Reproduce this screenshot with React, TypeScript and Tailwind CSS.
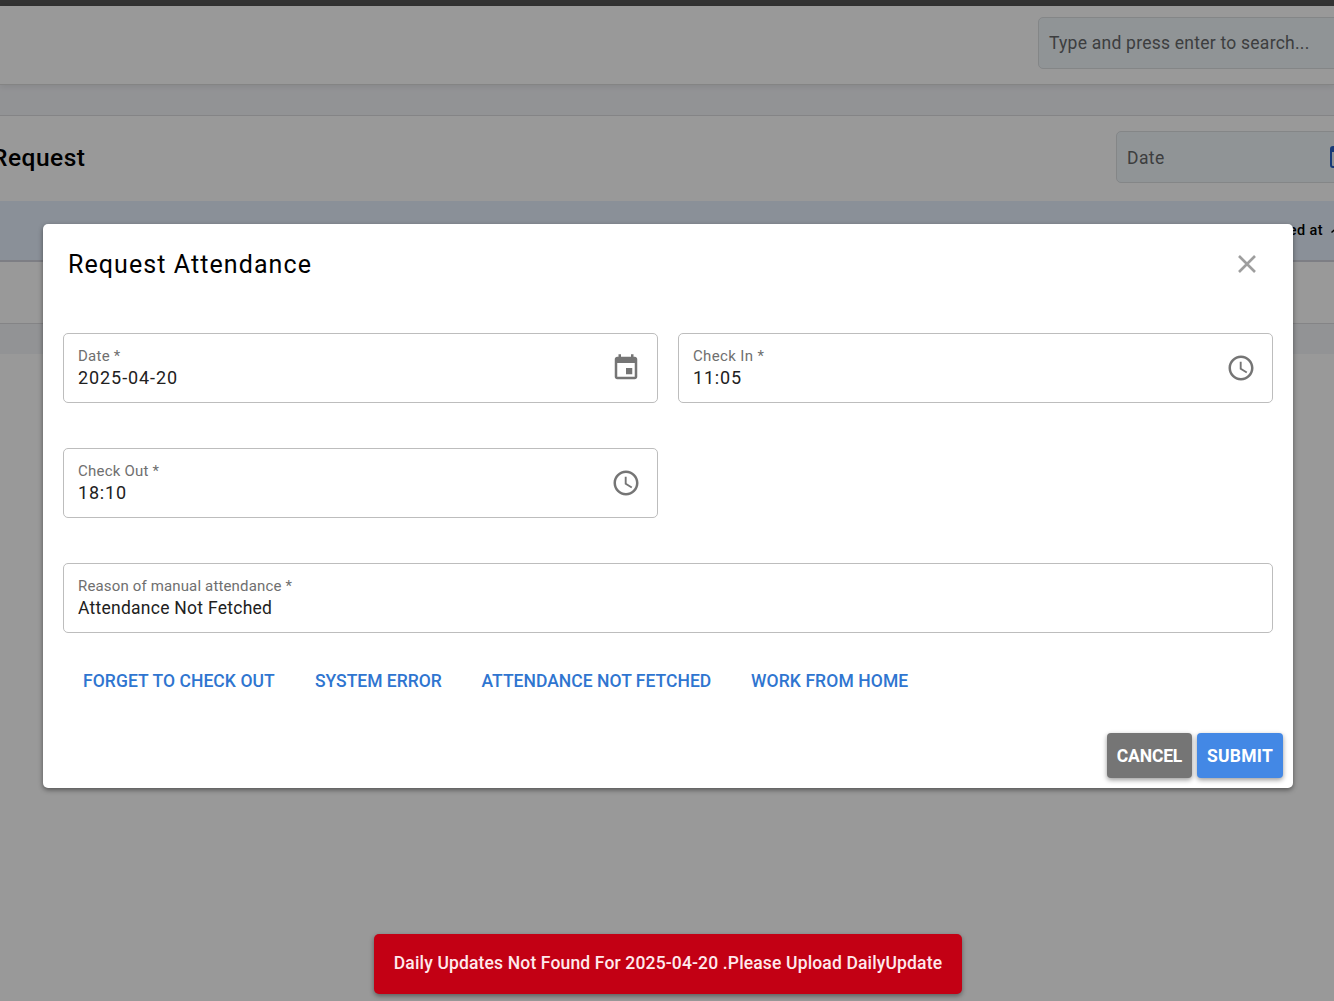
import React from "react";

type FieldProps = {
  label: string;
  value: string;
  valueClass: string;
  labelClass: string;
  icon?: React.ReactNode;
};

function CalendarIcon() {
  return (
    <svg viewBox="0 0 24 24" className="size-[30px]" fill="currentColor">
      <path d="M17 12h-5v5h5v-5zM16 1v2H8V1H6v2H5c-1.11 0-1.99.9-1.99 2L3 19c0 1.1.89 2 2 2h14c1.1 0 2-.9 2-2V5c0-1.1-.9-2-2-2h-1V1h-2zm3 18H5V8h14v11z" />
    </svg>
  );
}

function ClockIcon() {
  return (
    <svg viewBox="0 0 24 24" className="size-[30px]" fill="currentColor">
      <path d="M11.99 2C6.47 2 2 6.48 2 12s4.47 10 9.99 10C17.52 22 22 17.52 22 12S17.52 2 11.99 2zM12 20c-4.42 0-8-3.58-8-8s3.58-8 8-8 8 3.58 8 8-3.58 8-8 8z" />
      <path d="M12.5 7H11v6l5.25 3.15.75-1.23-4.5-2.67z" />
    </svg>
  );
}

function Field({ label, value, labelClass, valueClass, icon }: FieldProps) {
  return (
    <div className="flex h-[70px] items-center justify-between rounded-[5px] border border-[#bdbdbd] pr-[16px] pl-[14px]">
      <div className="pb-[3px]">
        <div className={`text-[15px] leading-[22px] text-[#6f6f6f] ${labelClass}`}>{label}</div>
        <div className={`leading-[22px] text-[#212121] ${valueClass}`}>{value}</div>
      </div>
      {icon && <span className="text-[#757575]">{icon}</span>}
    </div>
  );
}

const reasons = [
  { label: "FORGET TO CHECK OUT", width: "w-[192px] tracking-[0.07px]" },
  { label: "SYSTEM ERROR", width: "w-[126.5px] tracking-[-0.02px]" },
  { label: "ATTENDANCE NOT FETCHED", width: "w-[229.5px] tracking-[0.03px]" },
  { label: "WORK FROM HOME", width: "w-[158px] tracking-[0.1px]" },
];

function Page() {
  return (
    <div className="h-full">
      <div className="h-[6px] bg-[#555555]" />
      <header className="relative flex h-[79px] justify-end border-b border-[#dcdcdc] bg-white pt-[11px] shadow-[0_2px_6px_rgba(0,0,0,0.08)]">
        <div className="-mr-[10px] flex h-[52px] w-[306px] items-center rounded-[5px] border border-[#dcdfe2] bg-[#f0f7fb] pl-[10px] text-[17.5px] tracking-[0.24px] text-[#66686a]">
          Type and press enter to search...
        </div>
      </header>
      <main className="bg-[#f4f5f9] pt-[30px] pb-[30px]">
        <section className="border-y border-[#dcdcdf] bg-white">
          <div className="flex h-[85px] items-start justify-between pt-[15px]">
            <h1 className="-ml-[8px] text-[24.5px] leading-[54px] font-medium tracking-[0.5px] text-black">Request</h1>
            <div className="-mr-[24px] flex h-[52px] w-[242px] items-center justify-between rounded-[5px] border border-[#dcdfe2] bg-[#f0f7fb] pr-[5px] pl-[10px]">
              <span className="pt-[2px] text-[17.5px] tracking-[0.4px] text-[#66686a]">Date</span>
              <span className="block h-[22px] w-[22px] rounded-[3px] border-2 border-t-[6px] border-[#2962c8]" />
            </div>
          </div>
          <div className="flex h-[61px] items-start justify-end gap-[8px] border-b-2 border-[#d0d3dc] bg-[#e6f1fd] pt-[19px] text-[14.5px] leading-[20px] font-medium tracking-[0.4px] text-black">
            <span className="pt-[1px]">ed at</span>
            <svg viewBox="0 0 10 8" className="-mr-[7px] mt-[7px] h-[8px] w-[10px]" fill="none" stroke="currentColor" strokeWidth="1.5">
              <path d="M0.5 5.5 5 1.5l4.5 4" />
            </svg>
          </div>
          <div className="h-[61px]" />
        </section>
      </main>
    </div>
  );
}

function RequestDialog() {
  return (
    <div className="flex h-[564px] w-[1250px] flex-col rounded-[5px] bg-white shadow-[0_2px_5px_rgba(0,0,0,0.45)]">
      <div className="flex h-[80px] items-center justify-between pr-[37px] pl-[25px]">
        <h2 className="pt-[2px] text-[25px] tracking-[1.08px] text-black">Request Attendance</h2>
        <svg viewBox="0 0 18 18" className="size-[18px]" fill="none" stroke="#9e9e9e" strokeWidth="2.6">
          <path d="M1 1l16 16M17 1L1 17" />
        </svg>
      </div>
      <div className="mx-[20px] mt-[29px] grid grid-cols-2 gap-x-[20px] gap-y-[45px]">
        <Field label="Date *" labelClass="tracking-[0.25px]" value="2025-04-20" valueClass="text-[18px] tracking-[0.92px]" icon={<CalendarIcon />} />
        <Field label="Check In *" labelClass="tracking-[0.35px]" value="11:05" valueClass="text-[18px] tracking-[0.8px]" icon={<ClockIcon />} />
        <Field label="Check Out *" labelClass="tracking-[0.22px]" value="18:10" valueClass="text-[18px] tracking-[0.8px]" icon={<ClockIcon />} />
        <div className="col-span-2">
          <Field label="Reason of manual attendance *" labelClass="tracking-[0.15px]" value="Attendance Not Fetched" valueClass="text-[17.5px] tracking-[0.26px]" />
        </div>
      </div>
      <div className="mt-[32px] ml-[40px] flex gap-[40px] text-[17.5px] leading-[32px] font-medium whitespace-nowrap text-[#2f75d0]">
        {reasons.map((r) => (
          <button key={r.label} className={`text-left ${r.width}`}>
            {r.label}
          </button>
        ))}
      </div>
      <div className="mt-auto mr-[10px] mb-[10px] flex justify-end gap-[5px] text-[17.5px] font-bold text-white">
        <button className="h-[45px] w-[85px] rounded-[4px] bg-[#757575] pt-[2px] tracking-[-0.16px] shadow-[0_2px_5px_rgba(0,0,0,0.4)]">CANCEL</button>
        <button className="h-[45px] w-[86px] rounded-[4px] bg-[#4388e5] pt-[2px] tracking-[0.25px] shadow-[0_2px_5px_rgba(0,0,0,0.4)]">SUBMIT</button>
      </div>
    </div>
  );
}

export default function App() {
  return (
    <div className="relative h-[1001px] w-full overflow-hidden bg-white font-['Roboto',sans-serif]">
      <Page />
      <div className="absolute inset-0 flex items-start bg-black/40 pt-[224px] pl-[43px]">
        <RequestDialog />
      </div>
      <div className="absolute bottom-[7px] left-[374px] flex h-[60px] w-[588px] items-center justify-center rounded-[5px] bg-[#c30014] pb-[2px] text-[17.5px] font-medium tracking-[0.15px] whitespace-nowrap text-[#ffe9ec] shadow-[0_2px_5px_rgba(0,0,0,0.4)]">
        Daily Updates Not Found For 2025-04-20 .Please Upload DailyUpdate
      </div>
    </div>
  );
}
